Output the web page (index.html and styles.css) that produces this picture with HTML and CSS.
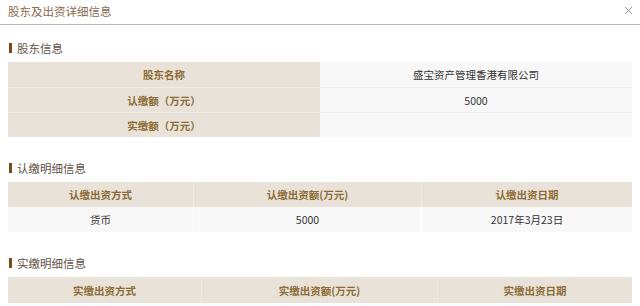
FILE: index.html
```html
<!DOCTYPE html>
<html lang="zh-CN">
<head>
<meta charset="utf-8">
<link rel="stylesheet" href="styles.css">
</head>
<body>
<div class="dialog">
  <div class="dialog-head">
    <span class="dialog-title">股东及出资详细信息</span>
    <svg class="close" width="9" height="9" viewBox="0 0 9 9"><path d="M1 1L8 8M8 1L1 8" stroke="#9a9a9a" stroke-width="1" fill="none"/></svg>
  </div>
  <div class="dialog-body">
    <h3 class="sec-title">股东信息</h3>
    <div class="kv">
      <div class="kv-row"><div class="k">股东名称</div><div class="v">盛宝资产管理香港有限公司</div></div>
      <div class="kv-row"><div class="k">认缴额（万元）</div><div class="v">5000</div></div>
      <div class="kv-row"><div class="k">实缴额（万元）</div><div class="v"></div></div>
    </div>

    <h3 class="sec-title">认缴明细信息</h3>
    <div class="grid grid-a">
      <div class="th">认缴出资方式</div><div class="th">认缴出资额(万元)</div><div class="th">认缴出资日期</div>
      <div class="td">货币</div><div class="td">5000</div><div class="td">2017年3月23日</div>
    </div>

    <h3 class="sec-title">实缴明细信息</h3>
    <div class="grid grid-b">
      <div class="th">实缴出资方式</div><div class="th">实缴出资额(万元)</div><div class="th">实缴出资日期</div>
    </div>
  </div>
</div>
</body>
</html>
```

FILE: styles.css
```css
* { box-sizing: border-box; }
html, body { margin: 0; padding: 0; background: #fff; }
body {
  font-family: "Noto Sans CJK SC", "Noto Sans", sans-serif;
  width: 640px;
  height: 306px;
  overflow: hidden;
}
.dialog-head {
  height: 25px;
  border-bottom: 1px solid #b8b8b8;
  display: flex;
  align-items: center;
  justify-content: space-between;
  padding: 0 7px 3px 8px;
}
.dialog-title {
  font-size: 11.5px;
  color: #8b6a4c;
  line-height: 16px;
}
.close { display: block; margin-right: 0; }
.dialog-body { padding: 0 8px; }
.sec-title {
  margin: 15px 0 6px 0;
  height: 16px;
  line-height: 16px;
  font-size: 11.5px;
  font-weight: normal;
  color: #5e5248;
  display: flex;
  align-items: center;
  gap: 5px;
}
.sec-title::before {
  content: "";
  width: 3px;
  height: 10px;
  background: #7a4a1c;
  margin-left: 1px;
}
.kv + .sec-title, .grid + .sec-title { margin-top: 23px; }
.kv { display: flex; flex-direction: column; }
.kv-row {
  display: grid;
  grid-template-columns: 312px 312px;
  height: 25px;
}
.kv-row + .kv-row .k { border-top: 1px solid #efebe4; }
.kv-row + .kv-row .v { border-top: 1px solid #efefef; }
.k, .v, .th, .td {
  display: flex;
  align-items: center;
  justify-content: center;
  font-size: 10.5px;
}
.k, .th {
  background: #e8e2d8;
  color: #8d6c35;
  font-weight: bold;
}
.v, .td {
  background: #f8f8f8;
  color: #333;
}
.grid { display: grid; grid-auto-rows: 25px; }
.grid-a { grid-template-columns: 185px 228px 211px; }
.grid-b { grid-template-columns: 193px 236px 195px; grid-auto-rows: 26px; }
.th + .th { border-left: 1px solid #efebe4; }
.td + .td { border-left: 1px solid #fdfdfd; }
```
